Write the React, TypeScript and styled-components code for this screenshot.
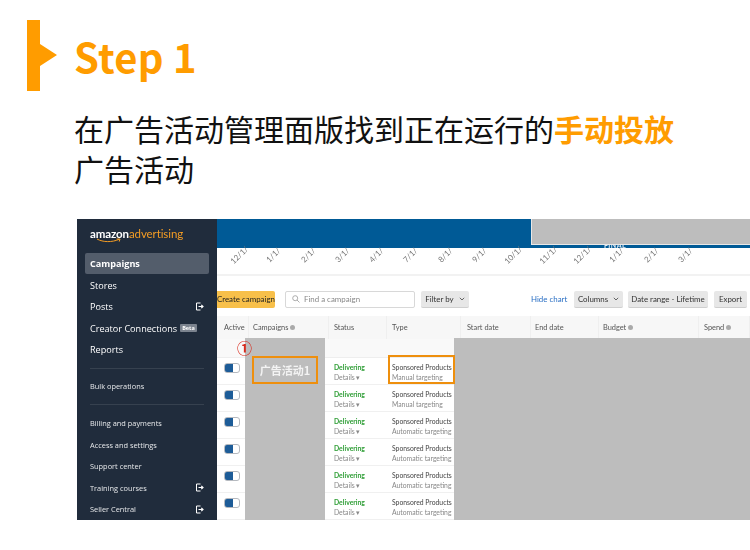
import React from "react";
import styled, { createGlobalStyle } from "styled-components";

const Global = createGlobalStyle`
  html, body { margin: 0; padding: 0; background: #fff; }
  body { width: 750px; height: 550px; overflow: hidden; font-family: "Noto Sans CJK SC", "Noto Sans", sans-serif; }
`;
const Page = styled.div`
  width: 750px; height: 550px; padding-top: 20px; box-sizing: border-box; overflow: hidden;
`;
const Head = styled.header`
  display: flex; height: 71px; padding-left: 27px; gap: 17px; align-items: center;
`;
const Marker = styled.svg`
  width: 30px; height: 71px; flex: none; display: block;
`;
const StepTitle = styled.h1`
  margin: 0; font-size: 40px; line-height: 71px; font-weight: 700; color: #ff9c00;
  font-family: "Noto Sans CJK SC", sans-serif; letter-spacing: 0.2px; position: relative; top: 1px;
`;
const Lead = styled.p`
  margin: 17px 0 0 74px; width: 610px; font-size: 30px; line-height: 40px; color: #111; font-weight: 400;
  font-family: "Noto Sans CJK SC", sans-serif;
  strong { color: #ff9c00; font-weight: 700; }
`;
const Shot = styled.section`
  position: relative; margin: 31px 0 0 77px; width: 673px; height: 301px; display: flex; overflow: hidden;
  background: #fff; font-family: "Lato", "Noto Sans", sans-serif; filter: blur(0.25px);
`;
const Side = styled.aside`
  width: 140px; flex: none; background: #202c3c; color: #fff; box-sizing: border-box; padding: 0 8px;
  display: flex; flex-direction: column; font-family: "Open Sans", sans-serif;
`;
const LogoRow = styled.div`
  height: 34px; padding: 7px 0 0 5px; box-sizing: border-box; font-size: 11.5px; line-height: 16px; position: relative;
  font-family: "Lato", sans-serif; letter-spacing: -0.1px;
  b { font-weight: 700; color: #fff; }
  span { color: #f39c24; font-weight: 400; }
  svg { position: absolute; left: 11px; top: 19px; }
`;
const NavItem = styled.div<{ $active?: boolean; $small?: boolean }>`
  height: 21.8px; display: flex; align-items: center; justify-content: space-between;
  padding: 0 5px; border-radius: 2px; box-sizing: border-box;
  font-size: ${p => (p.$small ? 7.4 : 9.1)}px; font-weight: ${p => (p.$active ? 700 : 400)};
  background: ${p => (p.$active ? "#535d6b" : "transparent")};
  color: ${p => (p.$small ? "#e6e8ea" : "#fff")};
  white-space: nowrap;
`;
const Beta = styled.em`
  font-style: normal; font-size: 5.5px; font-weight: 700; background: #7b838e; color: #fff; padding: 0 2px; margin-left: 3px; border-radius: 1px;
`;
const NavText = styled.span`display: flex; align-items: center;`;
const Rule = styled.div<{ $before: number; $after: number }>`
  height: 1px; background: #36414f; margin: ${p => p.$before}px 5px ${p => p.$after}px;
`;
const Main = styled.div`
  flex: 1; min-width: 0; display: flex; flex-direction: column; background: #fff;
`;
const Band = styled.div`
  height: 29px; flex: none; background: #005a96; position: relative; overflow: hidden;
`;
const BandLabel = styled.span`
  position: absolute; left: 387px; top: 21px; font-size: 7px; line-height: 10px; font-weight: 700; color: #dfe9f2; letter-spacing: 0.4px;
`;
const Axis = styled.div`
  height: 28px; flex: none; display: flex; padding-left: 5px; border-bottom: 2px solid #f2f2f2; box-sizing: border-box;
`;
const Tick = styled.span`
  width: 34.3px; flex: none; font-size: 8px; color: #777; transform: rotate(-45deg); transform-origin: 50% 50%;
  height: 12px; line-height: 12px; margin-top: 1px; white-space: nowrap; text-align: center;
`;
const Toolbar = styled.div`
  height: 38px; flex: none; display: flex; align-items: center; box-sizing: border-box; padding-top: 8px; background: #fff;
`;
const Create = styled.div`
  width: 58px; height: 17px; margin-right: 10px; background: #f8c04a; border-radius: 0 2px 2px 0;
  font-size: 7.9px; line-height: 17px; color: #222; white-space: nowrap; overflow: hidden; flex: none; text-align: right; padding-right: 5px; box-sizing: border-box;
`;
const Search = styled.div`
  width: 130px; height: 17px; border: 1px solid #d8d8d8; border-radius: 2px; box-sizing: border-box; flex: none;
  display: flex; align-items: center; gap: 4px; padding-left: 6px; font-size: 7.9px; color: #888;
`;
const Btn = styled.div<{ $w: number; $ml: number }>`
  width: ${p => p.$w}px; margin-left: ${p => p.$ml}px; height: 17px; flex: none; background: #e7e7e7; border-radius: 2px; border-bottom: 1px solid #cfcfcf;
  box-sizing: border-box; display: flex; align-items: center; justify-content: center; gap: 5px; font-size: 7.9px; color: #333; white-space: nowrap;
`;
const Link = styled.div`
  margin-left: 62px; width: 33px; flex: none; font-size: 7.9px; color: #2a6fc4; white-space: nowrap;
`;
const COLS = "32px 80px 58px 74px 70px 68px 100px 1fr";
const HeadRow = styled.div`
  display: grid; grid-template-columns: ${COLS}; height: 23px; flex: none; background: #f7f7f7; align-items: center; margin-top: 2px;
`;
const HeadCell = styled.div<{ $pad?: number }>`
  font-size: 7.4px; color: #555; padding-left: ${p => p.$pad ?? 5}px; height: 100%; display: flex; align-items: center; gap: 2px; white-space: nowrap;
  border-right: 1px solid #efefef; box-sizing: border-box;
`;
const Info = styled.i`
  width: 5px; height: 5px; border-radius: 50%; background: #aaa; display: inline-block;
`;
const Spacer = styled.div`
  height: 19px; flex: none; background: #f9f9f9; border-bottom: 1px solid #eee; box-sizing: border-box;
`;
const Row = styled.div`
  display: grid; grid-template-columns: ${COLS}; height: 27px; flex: none; border-bottom: 1px solid #f0f0f0; box-sizing: border-box;
`;
const ToggleCell = styled.div`
  padding: 5px 0 0 7px;
`;
const Toggle = styled.div`
  width: 14px; height: 8px; border-radius: 3px; border: 1px solid #b5b9bf; background: linear-gradient(90deg, #1d5c98 0 58%, #fff 58%);
`;
const Cell = styled.div`
  padding: 4px 0 0 5px; font-size: 6.8px; line-height: 10px; white-space: nowrap; color: #444;
`;
const Green = styled.div`color: #2f9e36; font-weight: 700;`;
const Muted = styled.div`color: #888;`;
const Overlay = styled.div<{ $l: number; $t: number; $w: number; $h: number }>`
  position: absolute; left: ${p => p.$l}px; top: ${p => p.$t}px; width: ${p => p.$w}px; height: ${p => p.$h}px; background: #bdbdbd;
`;
const TopMask = styled(Overlay)`
  border-left: 1px solid #e8e8e8; border-bottom: 1px solid #e8e8e8; box-sizing: border-box;
`;
const Callout = styled.div<{ $l: number; $t: number; $w: number; $h: number }>`
  position: absolute; left: ${p => p.$l}px; top: ${p => p.$t}px; width: ${p => p.$w}px; height: ${p => p.$h}px;
  border: 2px solid #ee8f0d; box-sizing: border-box;
`;
const CalloutLabel = styled(Callout)`
  color: #f3f3f3; font: 700 11px/24px "Noto Sans CJK SC", sans-serif; text-align: center;
`;
const Num = styled.div`
  position: absolute; left: 160px; top: 120px; font: 700 15px/18px "Noto Sans CJK SC", sans-serif; color: #d92a1c;
`;

const Ext = () => (
  <svg width="9" height="9" viewBox="0 0 9 9" fill="none" stroke="#fff" strokeWidth="1">
    <path d="M5.5 1H1.5v7h4" />
    <path d="M3.5 4.5H8M6.3 2.8 8 4.5 6.3 6.2" strokeWidth="1.2" />
  </svg>
);
const Chev = () => (
  <svg width="6" height="4" viewBox="0 0 6 4" fill="none" stroke="#555" strokeWidth="0.9"><path d="M.8.8 3 3 5.2.8" /></svg>
);
const ticks = ["12/1/", "1/1/", "2/1/", "3/1/", "4/1/", "7/1/", "8/1/", "9/1/", "10/1/", "11/1/", "12/1/", "1/1/", "2/1/", "3/1/"];
const rows = ["Manual targeting", "Manual targeting", "Automatic targeting", "Automatic targeting", "Automatic targeting", "Automatic targeting"];

export default function App() {
  return (
    <Page>
      <Global />
      <Head>
        <Marker viewBox="0 0 30 71">
          <path d="M0 0H13V24L30 35 13 46V71H0Z" fill="#ff9c00" />
        </Marker>
        <StepTitle>Step 1</StepTitle>
      </Head>
      <Lead>在广告活动管理面版找到正在运行的<strong>手动投放</strong>广告活动</Lead>
      <Shot>
        <Side>
          <LogoRow>
            <b>amazon</b><span>advertising</span>
            <svg width="26" height="5" viewBox="0 0 26 5" fill="none" stroke="#f39c24" strokeWidth="1"><path d="M1 1c6 3.4 15 3.4 22 .4M20.5 1H24l-.8 2.6" /></svg>
          </LogoRow>
          <NavItem $active>Campaigns</NavItem>
          <NavItem>Stores</NavItem>
          <NavItem>Posts<Ext /></NavItem>
          <NavItem><NavText>Creator Connections<Beta>Beta</Beta></NavText></NavItem>
          <NavItem>Reports</NavItem>
          <Rule $before={7} $after={7} />
          <NavItem $small>Bulk operations</NavItem>
          <Rule $before={7} $after={7} />
          <NavItem $small>Billing and payments</NavItem>
          <NavItem $small>Access and settings</NavItem>
          <NavItem $small>Support center</NavItem>
          <NavItem $small>Training courses<Ext /></NavItem>
          <NavItem $small>Seller Central<Ext /></NavItem>
        </Side>
        <Main>
          <Band><BandLabel>FINAL</BandLabel></Band>
          <Axis>{ticks.map((t, i) => <Tick key={i}>{t}</Tick>)}</Axis>
          <Toolbar>
            <Create>Create campaign</Create>
            <Search>
              <svg width="8" height="8" viewBox="0 0 8 8" fill="none" stroke="#999" strokeWidth="0.8"><circle cx="3.2" cy="3.2" r="2.5" /><path d="M5 5l2.5 2.5" /></svg>
              Find a campaign
            </Search>
            <Btn $w={48} $ml={6}>Filter by <Chev /></Btn>
            <Link>Hide chart</Link>
            <Btn $w={49} $ml={10}>Columns <Chev /></Btn>
            <Btn $w={80} $ml={5}>Date range - Lifetime</Btn>
            <Btn $w={33} $ml={6}>Export</Btn>
          </Toolbar>
          <HeadRow>
            <HeadCell $pad={7}>Active</HeadCell>
            <HeadCell $pad={4}>Campaigns <Info /></HeadCell>
            <HeadCell>Status</HeadCell>
            <HeadCell>Type</HeadCell>
            <HeadCell $pad={6}>Start date</HeadCell>
            <HeadCell $pad={4}>End date</HeadCell>
            <HeadCell $pad={4}>Budget <Info /></HeadCell>
            <HeadCell>Spend <Info /></HeadCell>
          </HeadRow>
          <Spacer />
          {rows.map((r, i) => (
            <Row key={i}>
              <ToggleCell><Toggle /></ToggleCell>
              <div />
              <Cell><Green>Delivering</Green><Muted>Details ▾</Muted></Cell>
              <Cell>Sponsored Products<Muted>{r}</Muted></Cell>
            </Row>
          ))}
        </Main>
        <TopMask $l={454} $t={0} $w={219} $h={26} />
        <Overlay $l={168} $t={119} $w={80} $h={182} />
        <Overlay $l={377} $t={119} $w={296} $h={182} />
        <CalloutLabel $l={175} $t={137} $w={66} $h={28}>广告活动1</CalloutLabel>
        <Callout $l={311} $t={136} $w={67} $h={29} />
        <Num>①</Num>
      </Shot>
    </Page>
  );
}
